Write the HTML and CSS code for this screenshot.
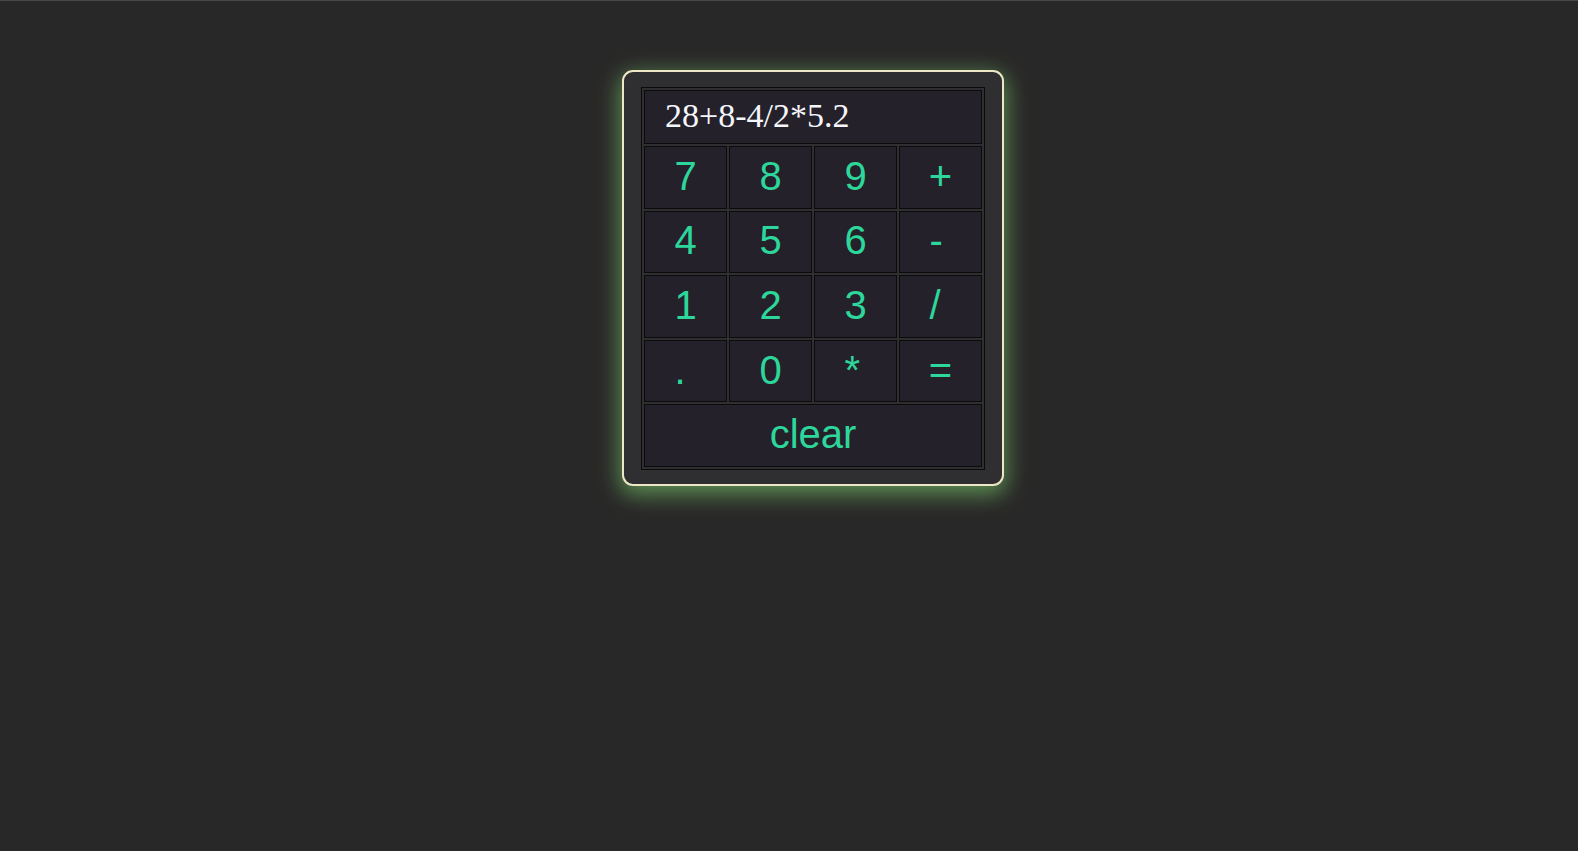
FILE: index.html
```html
<!DOCTYPE html>
<html lang="en">
<head>
<meta charset="utf-8">
<title>Calculator</title>
<link rel="stylesheet" href="styles.css">
</head>
<body>
<main class="page">
  <section class="calc">
    <div class="pad">
      <div class="display">28+8-4/2*5.2</div>
      <button class="key"><span>7</span></button>
      <button class="key"><span>8</span></button>
      <button class="key"><span>9</span></button>
      <button class="key"><span>+</span></button>
      <button class="key"><span>4</span></button>
      <button class="key"><span>5</span></button>
      <button class="key"><span>6</span></button>
      <button class="key"><span>-</span></button>
      <button class="key"><span>1</span></button>
      <button class="key"><span>2</span></button>
      <button class="key"><span>3</span></button>
      <button class="key"><span>/</span></button>
      <button class="key"><span>.</span></button>
      <button class="key"><span>0</span></button>
      <button class="key"><span>*</span></button>
      <button class="key"><span>=</span></button>
      <button class="key key-wide"><span>clear</span></button>
    </div>
  </section>
</main>
</body>
</html>
```

FILE: styles.css
```css
html, body {
  margin: 0;
  padding: 0;
}

body {
  background: #292828;
  border-top: 1px solid #474747;
  min-height: 850px;
  box-sizing: border-box;
}

.page {
  display: flex;
  justify-content: center;
  align-items: flex-start;
  padding: 69px 0 0 48px;
}

.calc {
  background: #2f2e31;
  border: 2px solid #eee7c6;
  border-radius: 11px;
  padding: 15px 17px 14px;
  box-shadow: 0 6px 22px 2px #5e9254;
}

.pad {
  display: grid;
  grid-template-columns: repeat(4, 83px);
  grid-template-rows: 54px repeat(5, 62.6px);
  gap: 2px;
  padding: 2px;
  border: 1px solid #0b0b0b;
}

.display {
  grid-column: 1 / -1;
  box-sizing: border-box;
  border: 1px solid #0b0b0b;
  background: #25212b;
  color: #f4f6fb;
  font-family: "Liberation Serif", "Times New Roman", serif;
  font-size: 34px;
  display: flex;
  align-items: center;
  padding: 0 0 2px 20px;
}

.key {
  margin: 0;
  padding: 0 0 3px;
  border: 1px solid #0b0b0b;
  background: #25212b;
  color: #2dd79b;
  font-family: "Liberation Sans", Arial, sans-serif;
  font-size: 40px;
  line-height: 1;
  display: flex;
  align-items: center;
  justify-content: center;
  box-sizing: border-box;
  cursor: pointer;
}

.key span {
  display: inline-block;
  min-width: 0.556em;
  text-align: left;
}

.key-wide {
  grid-column: 1 / -1;
}
```
